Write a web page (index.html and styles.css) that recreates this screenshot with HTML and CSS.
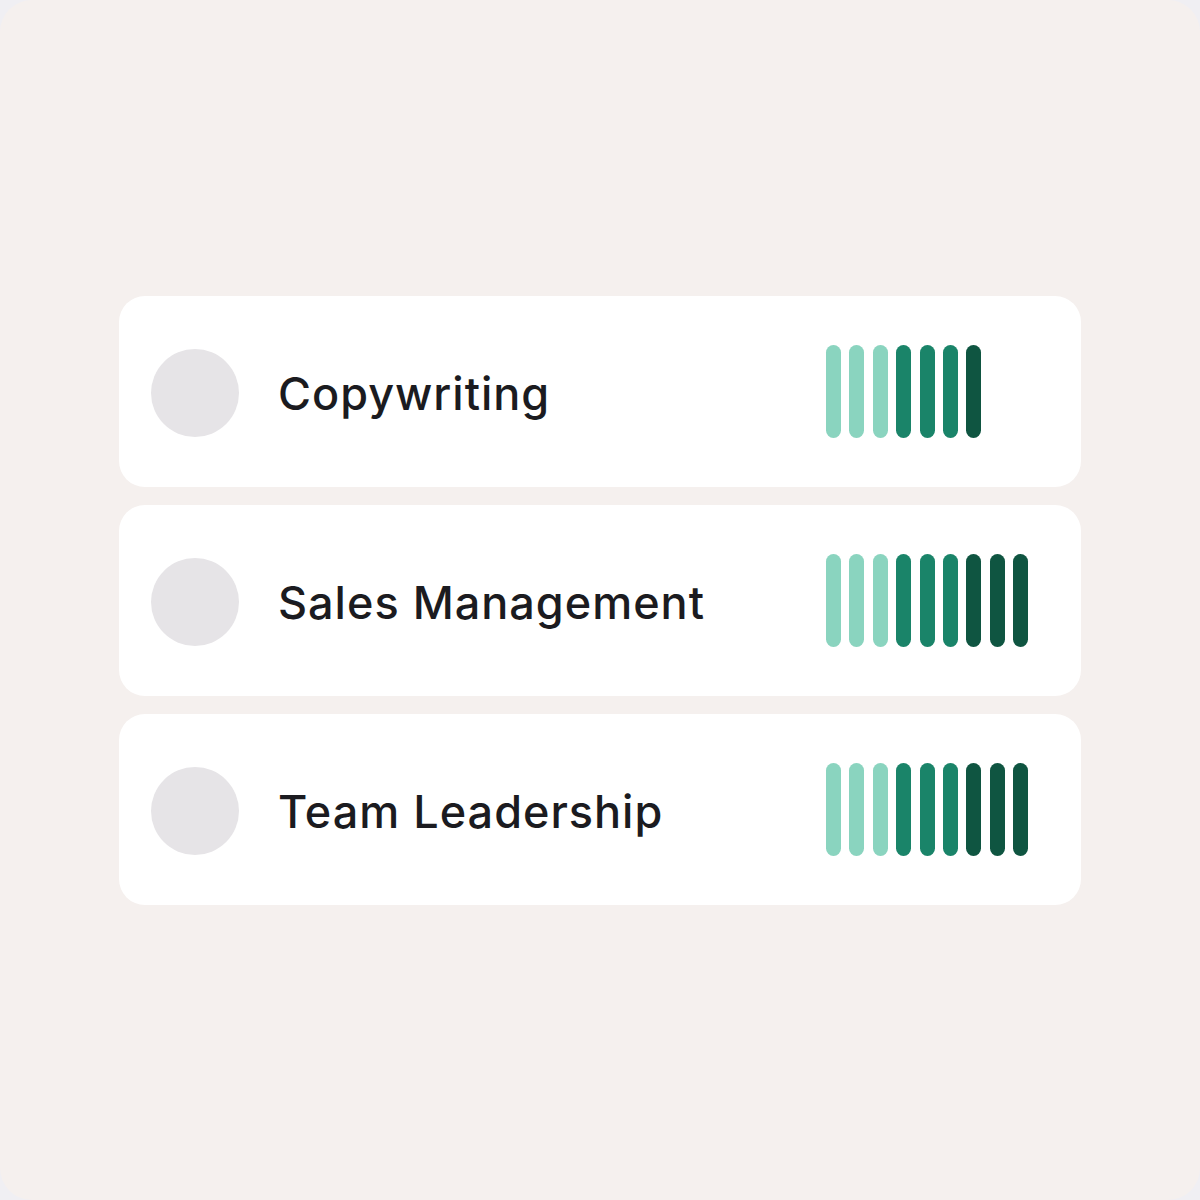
FILE: index.html
```html
<!DOCTYPE html>
<html>
<head>
<meta charset="utf-8">
<link rel="stylesheet" href="styles.css">
</head>
<body>
<div class="panel">
  <div class="list">
    <div class="card">
      <div class="avatar"></div>
      <div class="label">Copywriting</div>
      <div class="bars">
        <span class="bar l"></span><span class="bar l"></span><span class="bar l"></span>
        <span class="bar m"></span><span class="bar m"></span><span class="bar m"></span>
        <span class="bar d"></span>
      </div>
    </div>
    <div class="card">
      <div class="avatar"></div>
      <div class="label">Sales Management</div>
      <div class="bars">
        <span class="bar l"></span><span class="bar l"></span><span class="bar l"></span>
        <span class="bar m"></span><span class="bar m"></span><span class="bar m"></span>
        <span class="bar d"></span><span class="bar d"></span><span class="bar d"></span>
      </div>
    </div>
    <div class="card">
      <div class="avatar"></div>
      <div class="label">Team Leadership</div>
      <div class="bars">
        <span class="bar l"></span><span class="bar l"></span><span class="bar l"></span>
        <span class="bar m"></span><span class="bar m"></span><span class="bar m"></span>
        <span class="bar d"></span><span class="bar d"></span><span class="bar d"></span>
      </div>
    </div>
  </div>
</div>
</body>
</html>
```
FILE: styles.css
```css
html, body {
  margin: 0;
  padding: 0;
  background: #f0eff3;
}
.panel {
  width: 1200px;
  height: 1200px;
  box-sizing: border-box;
  background: #f5f0ee;
  border-radius: 32px;
  display: flex;
  align-items: center;
  justify-content: center;
}
.list {
  width: 962px;
  display: flex;
  flex-direction: column;
  gap: 18px;
}
.card {
  height: 191px;
  background: #ffffff;
  border-radius: 26px;
  display: flex;
  align-items: center;
  padding: 0 52px 0 32px;
  box-sizing: border-box;
}
.avatar {
  width: 88px;
  height: 88px;
  border-radius: 50%;
  background: #e6e4e7;
  flex: none;
  margin-top: 4px;
}
.label {
  flex: 1;
  margin-left: 39px;
  padding-top: 5px;
  font-family: Inter, "Noto Sans", sans-serif;
  font-size: 45px;
  font-weight: 500;
  letter-spacing: 1px;
  color: #1b1b20;
}
.bars {
  width: 203px;
  display: flex;
  gap: 8.4px;
  flex: none;
}
.bar {
  width: 15px;
  height: 93px;
  border-radius: 8px;
  display: block;
}
.bar.l { background: #8ad4bf; }
.bar.m { background: #1a8469; }
.bar.d { background: #0f5541; }
```
